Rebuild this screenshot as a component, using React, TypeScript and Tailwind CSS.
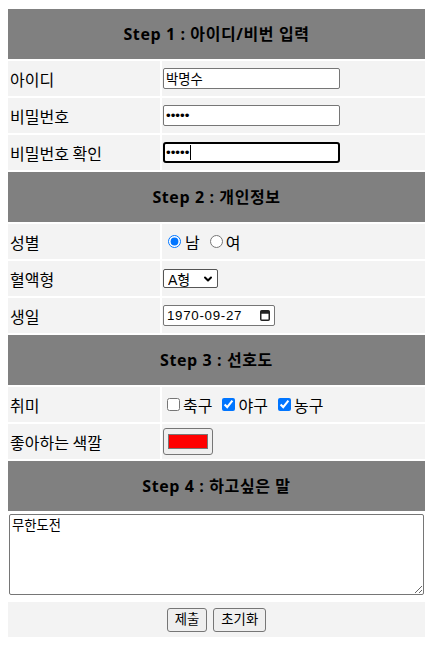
import { ChevronDown } from "lucide-react"

const head =
  "col-span-2 h-[50px] bg-[#808080] flex items-center justify-center text-[16px] font-bold tracking-[0.6px] text-black font-['Open_Sans','Noto_Sans_CJK_KR',sans-serif]"
const label = "h-[35px] bg-[#f3f3f3] flex items-center pl-[2px] text-[16px]"
const field = "h-[35px] bg-[#f3f3f3] flex items-center pl-[1px] text-[16px]"
const control = "font-['Liberation_Sans','Noto_Sans_CJK_KR',sans-serif] text-[13.33px] text-black"
const textInput = `${control} block w-[177px] h-[21px] border border-[#767676] rounded-[2px] px-[2px] bg-white`

function CalendarGlyph() {
  return (
    <svg width="10" height="12" viewBox="0 0 10 12" className="absolute right-[5px] top-[4px] pointer-events-none">
      <rect x="0.75" y="1.75" width="8.5" height="9.5" rx="1" fill="none" stroke="#222" strokeWidth="1.5" />
      <rect x="0.75" y="1.75" width="8.5" height="3" fill="#222" />
    </svg>
  )
}

export default function App() {
  return (
    <div className="min-h-[645px] bg-white pt-[9px] font-['Noto_Sans_CJK_KR',sans-serif] text-black">
      <form className="ml-2 w-[417px] grid grid-cols-[152px_263px] gap-[2px]">
        <div className={head}>Step 1 : 아이디/비번 입력</div>

        <div className={label}>아이디</div>
        <div className={field}>
          <input type="text" defaultValue="박명수" className={textInput} />
        </div>

        <div className={label}>비밀번호</div>
        <div className={field}>
          <input type="password" defaultValue="12345" className={textInput} />
        </div>

        <div className={label}>비밀번호 확인</div>
        <div className={field}>
          <div className="relative">
            <input
              type="password"
              defaultValue="12345"
              className={`${control} block w-[177px] h-[21px] border-2 border-black rounded-[3px] px-[1px] bg-white outline-none`}
            />
            <span className="absolute left-[27px] top-[3px] h-[15px] w-px bg-black" />
          </div>
        </div>

        <div className={head}>Step 2 : 개인정보</div>

        <div className={label}>성별</div>
        <div className={field}>
          <label className="flex items-center">
            <input type="radio" name="gender" defaultChecked className="ml-[5px] size-[13px]" />
            <span className="ml-[4px]">남</span>
          </label>
          <label className="flex items-center">
            <input type="radio" name="gender" className="ml-[10px] size-[13px]" />
            <span className="ml-[3px]">여</span>
          </label>
        </div>

        <div className={label}>혈액형</div>
        <div className={field}>
          <div className="relative">
            <select
              defaultValue="A"
              className={`${control} block appearance-none w-[55px] h-[19px] border border-[#555] rounded-[2px] pl-[4px] bg-white text-[14px]`}
            >
              <option value="A">A형</option>
              <option value="B">B형</option>
              <option value="O">O형</option>
              <option value="AB">AB형</option>
            </select>
            <ChevronDown
              size={12}
              strokeWidth={4}
              className="pointer-events-none absolute right-[4px] top-[4px]"
            />
          </div>
        </div>

        <div className={label}>생일</div>
        <div className={field}>
          <div className="relative">
            <input
              type="text"
              readOnly
              defaultValue="1970-09-27"
              className={`${control} block w-[112px] h-[21px] border border-[#767676] rounded-[2px] pl-[3px] bg-white tracking-[0.7px]`}
            />
            <CalendarGlyph />
          </div>
        </div>

        <div className={head}>Step 3 : 선호도</div>

        <div className={label}>취미</div>
        <div className={field}>
          <label className="flex items-center">
            <input type="checkbox" className="ml-[4px] size-[13px]" />
            <span className="ml-[3px]">축구</span>
          </label>
          <label className="flex items-center">
            <input type="checkbox" defaultChecked className="ml-[10px] size-[13px]" />
            <span className="ml-[3px]">야구</span>
          </label>
          <label className="flex items-center">
            <input type="checkbox" defaultChecked className="ml-[10px] size-[13px]" />
            <span className="ml-[3px]">농구</span>
          </label>
        </div>

        <div className={label}>좋아하는 색깔</div>
        <div className={field}>
          <input
            type="color"
            defaultValue="#ff0000"
            className="block w-[50px] h-[27px] border border-[#767676] rounded-[3px] bg-[#efefef] px-[2px] py-[1px]"
          />
        </div>

        <div className={head}>Step 4 : 하고싶은 말</div>

        <div className="col-span-2 h-[87px] pt-[1px] pl-[1px]">
          <textarea
            defaultValue="무한도전"
            className={`${control} block w-[415px] h-[81px] border border-[#767676] rounded-[2px] px-[2px] py-[1px] bg-white`}
          />
        </div>

        <div className="col-span-2 h-[35px] bg-[#f3f3f3] flex items-center justify-center gap-[6px]">
          <button type="submit" className={`${control} h-[24px] px-[7px] border border-[#767676] rounded-[3px] bg-[#efefef]`}>
            제출
          </button>
          <button type="reset" className={`${control} h-[24px] px-[7px] border border-[#767676] rounded-[3px] bg-[#efefef]`}>
            초기화
          </button>
        </div>
      </form>
    </div>
  )
}
